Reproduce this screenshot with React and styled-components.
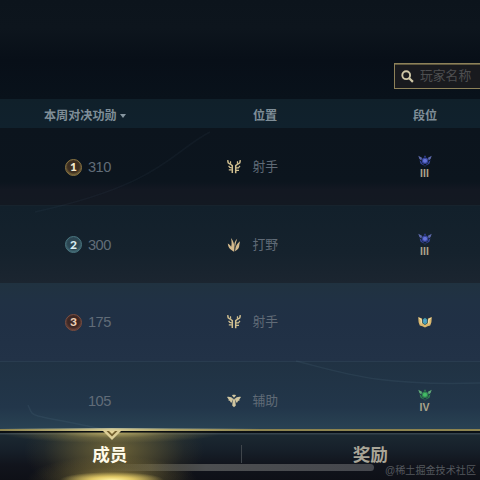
import React from "react";
import styled, { createGlobalStyle } from "styled-components";

const GlobalStyle = createGlobalStyle`
  * {
    box-sizing: border-box;
  }

  body {
    margin: 0;
    background: #0a1119;
    font-family: "Liberation Sans", "Noto Sans CJK SC", sans-serif;
  }
`;

const Screen = styled.div`
  position: relative;
  width: 480px;
  height: 480px;
  overflow: hidden;
  display: flex;
  flex-direction: column;
  background: linear-gradient(180deg, #0c141c 0, #0d151d 28px, #080f18 60px, #09121b 99px);
`;

const TopBar = styled.header`
  height: 99px;
  flex: none;
  display: flex;
  justify-content: flex-end;
  align-items: flex-start;
  padding-top: 63px;
`;

const SearchBox = styled.div`
  width: 86px;
  height: 26px;
  display: flex;
  align-items: center;
  gap: 6px;
  padding-left: 6px;
  border: 1px solid #8d8159;
  border-right: 0;
  background: #191a1e;
  box-shadow: inset 0 1px 0 #5f583f;
`;

const Placeholder = styled.span`
  font-size: 12.8px;
  line-height: 18px;
  color: #4d4e50;
  white-space: nowrap;
`;

const columns = "227px 173px 50px";

const TableHead = styled.div`
  height: 29px;
  flex: none;
  display: grid;
  grid-template-columns: ${columns};
  align-items: center;
  background: linear-gradient(180deg, #10202a, #10212d);
  color: #7f8e98;
  font-size: 12.1px;
  font-weight: 700;
  line-height: 18px;
`;

const HeadCell = styled.div`
  display: flex;
  align-items: center;
  gap: 3px;
  padding: 4px 0 0 ${({ $indent }) => $indent}px;
  white-space: nowrap;
`;

const SortArrow = styled.i`
  margin-top: 1px;
  border: 3px solid transparent;
  border-top: 4px solid #8796a0;
  border-bottom: 0;
`;

const Row = styled.div`
  height: ${({ $height }) => $height}px;
  flex: none;
  display: grid;
  grid-template-columns: ${columns};
  align-items: start;
  background: ${({ $fill }) => $fill};
  border-top: ${({ $line }) => ($line ? `1px solid ${$line}` : "0")};
`;

const Cell = styled.div`
  height: ${({ $line }) => ($line ? 77 : 78)}px;
  display: flex;
  align-items: center;
`;

const ScoreCell = styled(Cell)`
  padding-left: 65px;
  gap: 6px;
`;

const Score = styled.span`
  font-size: 14.6px;
  line-height: 18px;
  letter-spacing: -0.5px;
  color: #616c78;
`;

const Medal = styled.span`
  width: 17px;
  height: 17px;
  flex: none;
  display: flex;
  align-items: center;
  justify-content: center;
  border-radius: 50%;
  border: 1.5px solid ${({ $tone }) => ($tone ? $tone.ring : "transparent")};
  background: ${({ $tone }) => ($tone ? $tone.fill : "none")};
  box-shadow: ${({ $tone }) => ($tone ? `inset 0 -1px 2px ${$tone.ring}` : "none")};
  color: ${({ $tone }) => ($tone ? $tone.text : "transparent")};
  font: 900 12px/14px Lato, sans-serif;
`;

const RoleCell = styled(Cell)`
  gap: 11.5px;
`;

const Role = styled.span`
  font-size: 12.8px;
  line-height: 18px;
  color: #606b77;
`;

const TierCell = styled(Cell)`
  flex-direction: column;
  justify-content: center;
  padding: 0 1px ${({ $stacked }) => ($stacked ? 1 : 0)}px 0;
`;

const TierLevel = styled.span`
  margin-top: 2px;
  height: 9px;
  font: 700 10.5px/9px "Liberation Sans", sans-serif;
  color: #aaa38b;
`;

const Waves = styled.svg`
  position: absolute;
  inset: 0;
  pointer-events: none;
`;

const TabBar = styled.nav`
  position: relative;
  flex: 1;
  display: flex;
  border-top: 2px solid #8d8450;
  background: linear-gradient(180deg, #0a1016 0, #0a1016 2px, #35434d 2px, #35434d 3px, #1b2831 4px, #17212b 17px, #11141c 34px, #0e1017 100%);
`;

const Glow = styled.div`
  position: absolute;
  inset: 0 200px 0 0;
  background:
    linear-gradient(#0b0f13, #0b0f13) 0 0 / 100% 1.5px no-repeat,
    radial-gradient(ellipse 52px 8px at 112px 100%, #fff3a0 0, rgba(244, 218, 110, 0.85) 40%, rgba(199, 169, 72, 0) 100%),
    radial-gradient(ellipse 85px 24px at 112px 100%, rgba(190, 164, 74, 0.6) 0, rgba(150, 130, 60, 0.25) 55%, rgba(150, 130, 60, 0) 100%),
    radial-gradient(ellipse 110px 10px at 112px 2px, rgba(202, 186, 108, 0.75) 0, rgba(150, 138, 80, 0.35) 50%, rgba(150, 138, 80, 0) 100%),
    radial-gradient(ellipse 90px 48px at 114px 40%, rgba(139, 122, 60, 0.74) 0, rgba(115, 103, 55, 0.48) 45%, rgba(100, 92, 50, 0.14) 78%, rgba(100, 92, 50, 0) 100%);
`;

const LineGlow = styled.i`
  position: absolute;
  left: 0;
  top: -3px;
  width: 260px;
  height: 3px;
  background: linear-gradient(90deg, rgba(240, 230, 165, 0) 0, rgba(240, 230, 165, 0.45) 60px, #f0e6ad 112px, rgba(240, 230, 165, 0.45) 170px, rgba(240, 230, 165, 0) 100%);
  opacity: 0.75;
`;

const Tab = styled.div`
  position: relative;
  flex: 1;
  display: flex;
  justify-content: center;
  padding-top: 11px;
  padding-left: ${({ $active }) => ($active ? 0 : 19)}px;
  padding-right: ${({ $active }) => ($active ? 19 : 0)}px;
  font-size: 17.6px;
  font-weight: 700;
  line-height: 26px;
  color: ${({ $active }) => ($active ? "#fffae8" : "#aaa698")};
`;

const TabDivider = styled.i`
  position: relative;
  width: 1px;
  height: 18px;
  margin: 14px 0 0 2px;
  background: #3f454b;
`;

const ActiveMarker = styled.svg`
  position: absolute;
  left: 101px;
  top: -3px;
`;

const HomeIndicator = styled.div`
  position: absolute;
  left: 106px;
  bottom: 9px;
  width: 268px;
  height: 7px;
  border-radius: 4px;
  background: linear-gradient(90deg, rgba(155, 143, 98, 0) 0, rgba(135, 128, 98, 0.4) 45px, #4c4e50 100px, #45474d 100%);
`;

const Watermark = styled.span`
  position: absolute;
  right: 4px;
  bottom: 1px;
  font-size: 10.1px;
  line-height: 16px;
  color: #54585e;
  white-space: nowrap;
`;

const SearchIcon = () => (
  <svg width="13" height="13" viewBox="0 0 13 13" fill="none" stroke="#cfc7a6">
    <circle cx="5.2" cy="5.2" r="3.9" strokeWidth="1.9" />
    <path d="M8 8l3.9 3.9" strokeWidth="2.2" />
  </svg>
);

const MarksmanIcon = () => (
  <svg width="14" height="16" viewBox="0 0 14 16" fill="none" stroke="#d0bf90" strokeWidth="1.5">
    <path d="M.7 1.2 1.2 3.8 3.2 5 5.3 6.6V13.9" />
    <path d="M3.5 2.2 3.6 4.8M1.6 6.8 2.8 8.4 4.8 8.8M1.8 10.8H4.8" strokeWidth="1.2" />
    <path d="M13.3 1.2 12.8 3.8 10.8 5 8.7 6.6V14.2" />
    <path d="M10.5 2.2 10.4 4.8M13 6.9 11.4 8.8H9M12 11.3H9" strokeWidth="1.2" />
  </svg>
);

const JungleIcon = () => (
  <svg width="14" height="16" viewBox="0 0 14 16" fill="#d4b98c">
    <path d="M4 1C6.6 4.2 8 8 7.2 14.8 4.5 12.6 1.2 11.8.8 6.4c1.7.9 2.7 2 3.4 3.4C4.9 7 4.6 3.8 4 1z" />
    <path d="M10.2 1.8C8 3.9 7.3 6.2 7.4 8.2l.6 2.8C8.4 7.6 9.2 4.8 10.2 1.8zM13 4.2c-2.8 2.1-4.6 4.9-5 10 2.7-1.6 4.4-3.1 4.3-6.3z" />
  </svg>
);

const SupportIcon = () => (
  <svg width="14" height="16" viewBox="0 0 14 16" fill="#d0c59f">
    <path d="M5 2.6 5.8 1.8h2.4l.8.8L7 4.8z" />
    <path d="M7 5.2 8.2 7l.6 5.4L7 14.2l-1.8-1.8L5.8 7z" />
    <path d="M0 3.9c2.7-.4 4.9.2 6.2 2L4.6 9.7l-1.5-.6.3-1.2-2-.4.3-1zM14 3.9c-2.7-.4-4.9.2-6.2 2l1.6 3.8 1.5-.6-.3-1.2 2-.4-.3-1z" />
  </svg>
);

const roleIcons = { marksman: MarksmanIcon, jungle: JungleIcon, support: SupportIcon };

const TierIcon = ({ wing, edge, gem }) => (
  <svg width="14" height="12" viewBox="0 0 14 12">
    <path d="M.3.8 4 2.8 3.4 5.6 1.4 4.1zM13.7.8 10 2.8l.6 2.8 2-1.5z" fill={edge} />
    <path d="M1.6 5.2l1.6 1 .8 2 1.7 1.2L7 11.4l1.3-2 1.7-1.2.8-2 1.6-1-.8 3.2-1.8 1.4H8.9L7 11.8 5.1 9.8H4.2L2.4 8.4z" fill={wing} />
    <path d="M6 1.7 7 .2l1 1.5-1 .8z" fill={wing} />
    <circle cx="7" cy="5.7" r="2.6" fill={gem} stroke={wing} strokeWidth="1.1" />
  </svg>
);

const GoldTierIcon = () => (
  <svg width="14" height="12" viewBox="0 0 14 12">
    <path d="M.2 1 4 2.4 4.3 7 7 9l2.7-2 .3-4.6L13.8 1l-.4 5.2-1.2 3.2-2.6.8L7 11.6 4.4 10.2l-2.6-.8-1.2-3.2z" fill="#d9b76e" />
    <path d="M1.3 2.3 3.2 3.6v3.9M12.7 2.3l-1.9 1.3v3.9" stroke="#f6e6b8" strokeWidth="1" fill="none" />
    <path d="M7 1.8 9.2 3.6v3.1L7 8.8 4.8 6.7V3.6z" fill="#469fae" />
    <path d="M7 3.2 8.1 4.6 7 6.8 5.9 4.6z" fill="#559bde" />
  </svg>
);

const medals = {
  1: { ring: "#8a7643", fill: "#3b2d20", text: "#f3ead0" },
  2: { ring: "#4a7680", fill: "#2b4551", text: "#d8edf0" },
  3: { ring: "#7c4e41", fill: "#3d2825", text: "#efd1b6" },
};

const tiers = {
  blue: { wing: "#36449a", edge: "#5d69aa", gem: "#6674d8" },
  green: { wing: "#2f8450", edge: "#5fa878", gem: "#43bb66" },
};

const members = [
  {
    rank: 1, score: 310, icon: "marksman", role: "射手", tier: "blue", level: "III", height: 77,
    fill: "linear-gradient(180deg, #0c141d 0, #0c151e 54px, #131822 62px, #131922 100%)",
  },
  {
    rank: 2, score: 300, icon: "jungle", role: "打野", tier: "blue", level: "III", height: 78, line: "#17232d",
    fill: "linear-gradient(180deg, #12202b, #15222d 60%, #1b2530)",
  },
  {
    rank: 3, score: 175, icon: "marksman", role: "射手", tier: "gold", height: 78,
    fill: "linear-gradient(180deg, #203240 0, #203144 18px, #203045 40px, #223247 100%)",
  },
  {
    score: 105, icon: "support", role: "辅助", tier: "green", level: "IV", height: 68, line: "#293c4f",
    fill: "linear-gradient(180deg, #203243 0, #22364a 45px, #294253 100%)",
  },
];

const MemberRow = ({ rank, score, icon, role, tier, level, height, fill, line }) => {
  const RoleIcon = roleIcons[icon];
  return (
    <Row $height={height} $fill={fill} $line={line}>
      <ScoreCell $line={line}>
        <Medal $tone={medals[rank]}>{rank}</Medal>
        <Score>{score}</Score>
      </ScoreCell>
      <RoleCell $line={line}>
        <RoleIcon />
        <Role>{role}</Role>
      </RoleCell>
      <TierCell $line={line} $stacked={Boolean(level)}>
        {tier === "gold" ? <GoldTierIcon /> : <TierIcon {...tiers[tier]} />}
        {level && <TierLevel>{level}</TierLevel>}
      </TierCell>
    </Row>
  );
};

const App = () => (
  <>
    <GlobalStyle />
    <Screen>
      <TopBar>
        <SearchBox>
          <SearchIcon />
          <Placeholder>玩家名称</Placeholder>
        </SearchBox>
      </TopBar>
      <TableHead>
        <HeadCell $indent={44}>
          本周对决功勋
          <SortArrow />
        </HeadCell>
        <HeadCell $indent={26}>位置</HeadCell>
        <HeadCell $indent={13}>段位</HeadCell>
      </TableHead>
      {members.map((member) => (
        <MemberRow key={member.score} {...member} />
      ))}
      <Waves width="480" height="480" fill="none" stroke="#557486" strokeWidth="1.5">
        <path d="M210 132C172 151 163 184 35 212" opacity=".08" />
        <path d="M296 361C347 374 379 386 480 383" opacity=".16" />
        <path d="M28 405C31 412 31 414 38 416C50 419 75 423 101 429" opacity=".16" />
      </Waves>
      <TabBar>
        <Glow />
        <LineGlow />
        <HomeIndicator />
        <Tab $active>成员</Tab>
        <TabDivider />
        <Tab>奖励</Tab>
        <ActiveMarker width="22" height="13" viewBox="0 0 22 13">
          <path d="M1 2h20L11 12z" fill="#ddcf98" />
          <path d="M5.5 3h11L11 8.4z" fill="#73602e" />
          <path d="M8 3h6l-3 3z" fill="#e6d69b" />
        </ActiveMarker>
        <Watermark>@稀土掘金技术社区</Watermark>
      </TabBar>
    </Screen>
  </>
);

export default App;
